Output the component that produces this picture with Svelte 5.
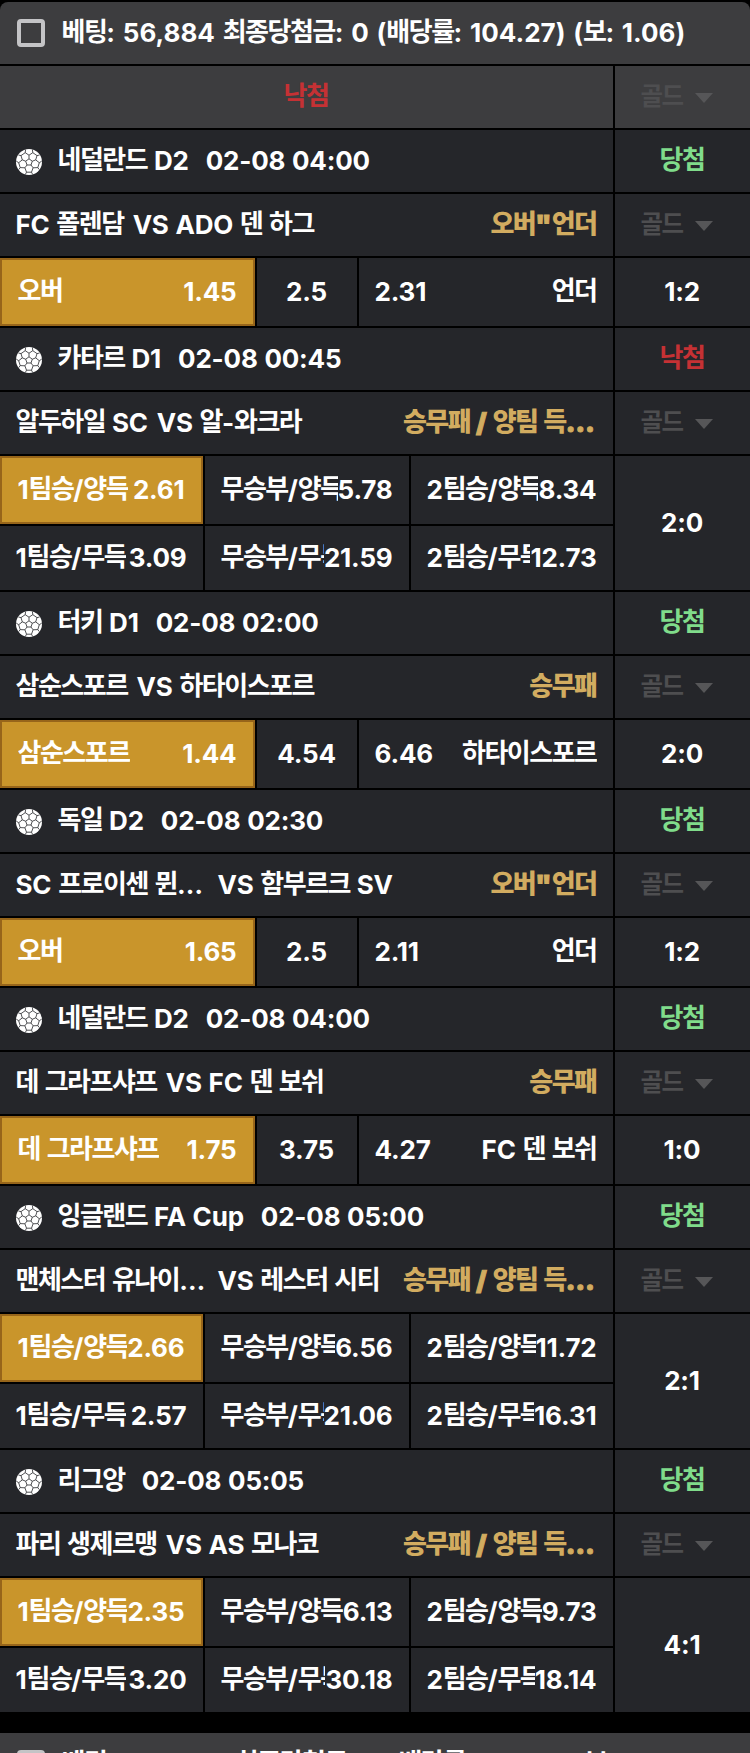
<script lang="ts">
  type Odd = { label?: string; value: string; picked?: boolean; flip?: boolean };
  type Match = {
    league: string;
    time: string;
    won: boolean;
    home: string;
    away: string;
    long?: boolean;
    market: string;
    score: string;
    odds: Odd[];
  };

  const OVER = '오버"언더';
  const BOTH = "승무패 / 양팀 득…";

  // 승무패/양팀득점: 6칸
  function six(v: string[]): Odd[] {
    const labels = ["1팀승/양득", "무승부/양득", "2팀승/양득", "1팀승/무득", "무승부/무득", "2팀승/무득"];
    return labels.map((label, i) => ({ label, value: v[i], picked: i === 0 }));
  }
  function three(a: string, v: string[], b: string): Odd[] {
    return [{ label: a, value: v[0], picked: true }, { value: v[1] }, { label: b, value: v[2], flip: true }];
  }

  const matches: Match[] = [
    { league: "네덜란드 D2", time: "02-08 04:00", won: true, home: "FC 폴렌담", away: "ADO 덴 하그", market: OVER, score: "1:2", odds: three("오버", ["1.45", "2.5", "2.31"], "언더") },
    { league: "카타르 D1", time: "02-08 00:45", won: false, home: "알두하일 SC", away: "알-와크라", market: BOTH, score: "2:0", odds: six(["2.61", "5.78", "8.34", "3.09", "21.59", "12.73"]) },
    { league: "터키 D1", time: "02-08 02:00", won: true, home: "삼순스포르", away: "하타이스포르", market: "승무패", score: "2:0", odds: three("삼순스포르", ["1.44", "4.54", "6.46"], "하타이스포르") },
    { league: "독일 D2", time: "02-08 02:30", won: true, home: "SC 프로이센 뮌…", away: "함부르크 SV", long: true, market: OVER, score: "1:2", odds: three("오버", ["1.65", "2.5", "2.11"], "언더") },
    { league: "네덜란드 D2", time: "02-08 04:00", won: true, home: "데 그라프샤프", away: "FC 덴 보쉬", market: "승무패", score: "1:0", odds: three("데 그라프샤프", ["1.75", "3.75", "4.27"], "FC 덴 보쉬") },
    { league: "잉글랜드 FA Cup", time: "02-08 05:00", won: true, home: "맨체스터 유나이…", away: "레스터 시티", long: true, market: BOTH, score: "2:1", odds: six(["2.66", "6.56", "11.72", "2.57", "21.06", "16.31"]) },
    { league: "리그앙", time: "02-08 05:05", won: true, home: "파리 생제르맹", away: "AS 모나코", market: BOTH, score: "4:1", odds: six(["2.35", "6.13", "9.73", "3.20", "30.18", "18.14"]) },
  ];

  // 한글과 라틴 문자를 나눠서 자간을 따로 준다.
  function runs(s: string) {
    return s.match(/[가-힣]+|[^가-힣]+/g) ?? [];
  }
</script>

{#snippet txt(s: string)}{#each runs(s) as r}<span class={/[가-힣]/.test(r) ? "ko" : "en"}>{r}</span>{/each}{/snippet}

{#snippet ball()}
  <svg class="ball" viewBox="0 0 26 26">
    <circle cx="13" cy="13" r="13" fill="#fff" />
    <g fill="none" stroke="#25262a" stroke-width="0.8" stroke-linejoin="round">
      <path d="M13 9.8l3.3 2.4-1.3 3.8h-4l-1.3-3.8z" />
      <path d="M13 9.8V6.2M16.3 12.2l3.4-1.3M15 16l2.1 2.8M11 16l-2.1 2.8M9.7 12.2l-3.4-1.3" />
      <path d="M13 6.2l-3.8-2.5L5 6.6l1.3 4.3-3.6 2.8 1.5 4.9 4.7.2 1.6 4.4h5l1.6-4.4 4.7-.2 1.5-4.9-3.6-2.8L21 6.6l-4.2-2.9z" />
      <path d="M9.2 3.7L9.6.6M16.8 3.7L16.4.6M5 6.6L2.4 6M21 6.6l2.6-.6M2.7 13.7L.3 12.2M23.3 13.7l2.4-1.5M4.2 18.6l-1.4 1.9M21.8 18.6l1.4 1.9M10.5 23.2L9.4 25.4M15.5 23.2l1.1 2.2" />
    </g>
  </svg>
{/snippet}

{#snippet gold()}
  <div class="cell side select"><span>{@render txt("골드")}</span><i class="caret"></i></div>
{/snippet}

{#snippet head(s: string)}
  <div class="cell head"><span class="check"></span><span>{@render txt(s)}</span></div>
{/snippet}

<main>
  <article class="slip">
    {@render head("베팅: 56,884 최종당첨금: 0 (배당률: 104.27) (보: 1.06)")}
    <div class="row result">
      <div class="cell center lose"><span>{@render txt("낙첨")}</span></div>
      {@render gold()}
    </div>
    {#each matches as m}
      <div class="row">
        <div class="cell league">
          {@render ball()}
          <span>{@render txt(m.league)}</span>
          <span class="time">{m.time}</span>
        </div>
        <div class="cell side {m.won ? 'win' : 'lose'}"><span>{@render txt(m.won ? "당첨" : "낙첨")}</span></div>
      </div>
      <div class="row">
        <div class="cell teams">
          <span class="home" class:long={m.long}>{@render txt(m.home)}</span>
          <span>VS {@render txt(m.away)}</span>
          <span class="market" class:cut={m.market.endsWith("…")}>{@render txt(m.market)}</span>
        </div>
        {@render gold()}
      </div>
      <div class="row">
        <div class="odds" class:six={m.odds.length === 6}>
          {#each m.odds as o}
            <div class="cell odd" class:picked={o.picked} class:flip={o.flip} class:center={!o.label}>
              {#if o.label}<span class="label">{@render txt(o.label)}</span>{/if}
              <span>{o.value}</span>
            </div>
          {/each}
        </div>
        <div class="cell side">{m.score}</div>
      </div>
    {/each}
  </article>
  <article class="slip next">
    {@render head("베팅: 103,680 최종당첨금: 0 (배당률: 88.69) (보: 1.06)")}
  </article>
</main>

<style>
  :global(body) {
    background: #000;
    overflow: hidden;
  }
  main {
    box-sizing: border-box;
    height: 1753px;
    padding-top: 2px;
    overflow: hidden;
    background: #000;
    color: #fff;
    font-family: "Inter", "Noto Sans CJK KR", sans-serif;
    font-size: 26px;
    font-weight: 700;
    line-height: 36px;
    letter-spacing: -0.2px;
    word-spacing: 0.8px;
    white-space: nowrap;
  }
  .ko {
    font-family: "Noto Sans CJK KR", sans-serif;
    font-weight: 700;
    line-height: 28px;
    letter-spacing: -1.5px;
    vertical-align: 1px;
  }
  .slip {
    display: flex;
    flex-direction: column;
    gap: 2px;
    overflow: hidden;
    border-radius: 8px 8px 0 0;
  }
  .next {
    margin-top: 21px;
    border-radius: 0;
  }
  .row {
    display: grid;
    grid-template-columns: 613px 1fr;
    gap: 2px;
  }
  .cell {
    box-sizing: border-box;
    display: flex;
    align-items: center;
    height: 62px;
    padding: 0 16.5px 0 15.5px;
    background: #25262a;
  }
  .row .side {
    height: auto;
    justify-content: center;
  }
  .center {
    justify-content: center;
  }
  .head,
  .result .cell {
    background: #3d3d3f;
  }
  .head {
    gap: 16.5px;
    letter-spacing: 0;
    word-spacing: 1.6px;
  }
  .check {
    box-sizing: border-box;
    width: 28px;
    height: 28px;
    margin-left: 1.5px;
    border: 4px solid #c4c4c6;
    border-radius: 4px;
  }
  .lose {
    color: #c53134;
  }
  .win {
    color: #80dc8b;
  }
  .row .select {
    justify-content: flex-start;
    padding-left: 25.5px;
    font-size: 24.5px;
    color: #4e4e50;
  }
  .caret {
    margin: 2px 0 0 12px;
    border: solid transparent;
    border-width: 10px 9px 0;
    border-top-color: #565658;
  }
  .ball {
    width: 26px;
    height: 26px;
    margin: 2px 16px 0 0;
  }
  .time {
    margin-left: 17px;
  }
  .home {
    margin-right: 9px;
  }
  .long {
    width: 193px;
  }
  .market {
    margin-left: auto;
    color: #d2ac60;
  }
  .cut {
    margin-right: 1.5px;
  }
  .market .ko {
    font-weight: 900;
  }
  .market .en {
    font-weight: 900;
    letter-spacing: 0.2px;
    word-spacing: 0.4px;
    -webkit-text-stroke: 1px #d2ac60;
  }
  .odds {
    display: grid;
    grid-template-columns: 255px 100px 1fr;
    grid-template-rows: 68px;
    gap: 2px;
  }
  .odds.six {
    grid-template-columns: 203px 204px 1fr;
    grid-template-rows: 68px 64px;
  }
  .odd {
    height: auto;
    min-width: 0;
    justify-content: space-between;
  }
  .odd.center {
    justify-content: center;
    padding: 0 1px 0 0;
  }
  .flip {
    flex-direction: row-reverse;
  }
  .label {
    min-width: 0;
    overflow-x: clip;
  }
  .picked {
    border: 2px solid #97651a;
    background: #c9952b;
  }
</style>
